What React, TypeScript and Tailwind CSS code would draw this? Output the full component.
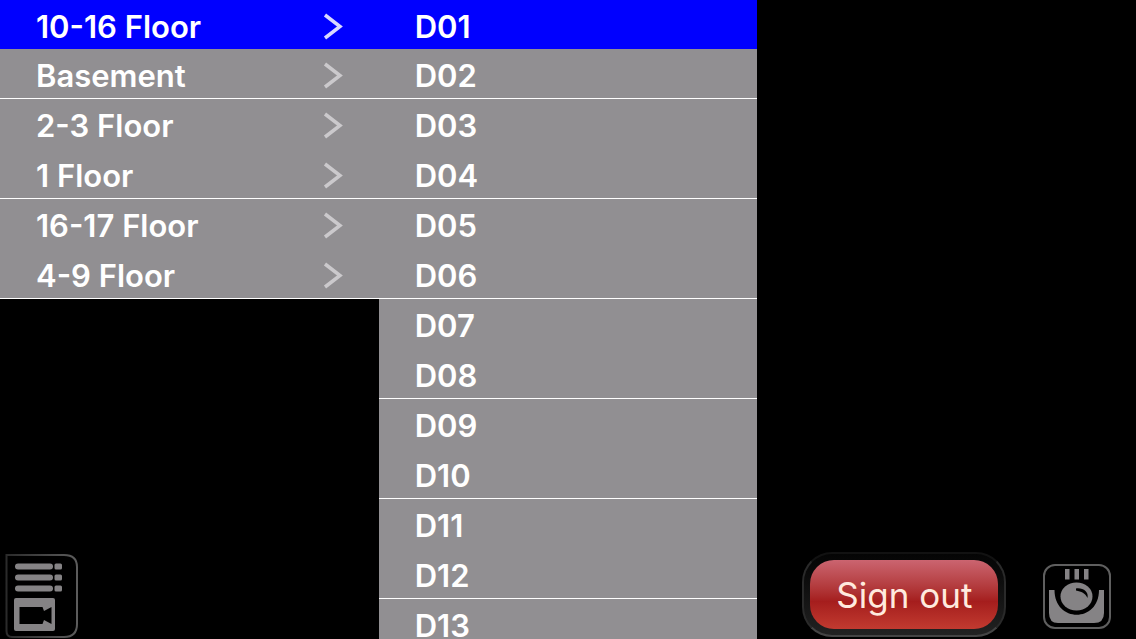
import React, { useState } from 'react';

const floors = ['10-16 Floor', 'Basement', '2-3 Floor', '1 Floor', '16-17 Floor', '4-9 Floor'];

const devices = [
  'D01', 'D02', 'D03', 'D04', 'D05', 'D06', 'D07',
  'D08', 'D09', 'D10', 'D11', 'D12', 'D13',
];

interface MenuListProps {
  label: string;
  items: string[];
  selected: number;
  onSelect: (index: number) => void;
  withArrow?: boolean;
}

const Arrow = () => (
  <svg width="20" height="28" viewBox="0 0 20 28" fill="none" aria-hidden="true">
    <path d="M2 2 L17 13.5 L2 25" stroke="currentColor" strokeWidth="3.5" />
  </svg>
);

const MenuList: React.FC<MenuListProps> = ({ label, items, selected, onSelect, withArrow }) => (
  <ul aria-label={label}>
    {items.map((item, index) => (
      <li key={item}>
        <button
          type="button"
          onClick={() => onSelect(index)}
          className={`flex w-full items-center justify-between px-9 pt-1 text-left text-[31px] leading-7 font-semibold text-white ${
            index === 0 ? 'h-[49px]' : 'h-[50px]'
          } ${index === selected ? 'bg-[#0000ff]' : 'bg-[#918f92]'} ${
            index % 2 === 1 ? 'border-b border-white' : ''
          }`}
        >
          <span>{item}</span>
          {withArrow && (
            <span className={index === selected ? 'text-[#d8d8ff]' : 'text-[#cbc9cc]'}>
              <Arrow />
            </span>
          )}
        </button>
      </li>
    ))}
  </ul>
);

const ListIcon = () => (
  <svg width="74" height="86" viewBox="0 0 74 86" fill="none" aria-hidden="true">
    <defs>
      <linearGradient id="frame" x1="0" x2="1" y1="0" y2="0">
        <stop offset="0" stopColor="#2b2b2b" />
        <stop offset="1" stopColor="#5c5c5c" />
      </linearGradient>
    </defs>
    <path
      d="M2.5 2 H60 Q73 2 73 14 V71 Q73 84 60 84 H8 Q2.5 84 2.5 78 Z"
      stroke="url(#frame)"
      strokeWidth="2"
    />
    <g fill="#858385">
      <rect x="11" y="10.5" width="38" height="6" rx="3" />
      <rect x="50.5" y="10.5" width="7.5" height="6" rx="1.5" />
      <rect x="11" y="21.5" width="38" height="6" rx="3" />
      <rect x="50.5" y="21.5" width="7.5" height="6" rx="1.5" />
      <rect x="11" y="32.5" width="38" height="6" rx="3" />
      <rect x="50.5" y="32.5" width="7.5" height="6" rx="1.5" />
      <rect x="10" y="45" width="41" height="33" rx="2" />
    </g>
    <path d="M15.5 54 H38.5 L40 58 L47.5 54 V71 L40 67 L38.5 71 H15.5 Z" fill="#000" />
  </svg>
);

const CameraIcon = () => (
  <svg width="68" height="66" viewBox="0 0 68 66" fill="none" aria-hidden="true">
    <rect x="1" y="2" width="66" height="63" rx="11" stroke="#5f5f5f" strokeWidth="2" />
    <g fill="#858385">
      <rect x="22" y="6" width="4.5" height="10.5" />
      <rect x="31.5" y="6" width="4.5" height="10.5" />
      <rect x="41" y="6" width="4.5" height="10.5" />
      <path d="M6 27 H11.5 C11.5 60 56 60 56 27 H61 V50 Q61 60 51 60 H15 Q6 60 6 50 Z" />
      <ellipse cx="33.5" cy="33.5" rx="16" ry="14" />
    </g>
    <path d="M33 25.5 C40 24.5 46 29 44.5 35 C42 30 38.5 28.5 33 27.5 Z" fill="#000" />
  </svg>
);

export default function App() {
  const [floor, setFloor] = useState(0);
  const [device, setDevice] = useState(0);

  return (
    <main className="grid h-screen grid-cols-3 overflow-hidden bg-black font-['Inter','Liberation_Sans',sans-serif]">
      {/* Floors */}
      <section className="flex min-h-0 flex-col justify-between">
        <MenuList label="Floors" items={floors} selected={floor} onSelect={setFloor} withArrow />
        <button type="button" aria-label="Video list" className="ml-1 self-start">
          <ListIcon />
        </button>
      </section>

      {/* Devices on the floor */}
      <section className="min-h-0 overflow-hidden">
        <MenuList label="Devices" items={devices} selected={device} onSelect={setDevice} />
      </section>

      {/* Actions */}
      <section className="flex items-end justify-between pr-[25px] pb-0.5 pl-[45px]">
        <button
          type="button"
          className="rounded-[30px] border-2 border-t-[#121212] border-r-[#2a2a2a] border-b-[#444444] border-l-[#2a2a2a] bg-linear-to-b from-[#050505] to-[#222222] p-1.5"
        >
          <span className="flex h-[69px] items-center justify-center rounded-3xl bg-linear-to-b from-[#cb6470] via-[#a51d1d] via-60% to-[#c23a30] px-[26px] pt-0.5 text-[35px] leading-none text-[#ffeade]">
            Sign out
          </span>
        </button>
        <button type="button" aria-label="Take snapshot" className="mb-2">
          <CameraIcon />
        </button>
      </section>
    </main>
  );
}
